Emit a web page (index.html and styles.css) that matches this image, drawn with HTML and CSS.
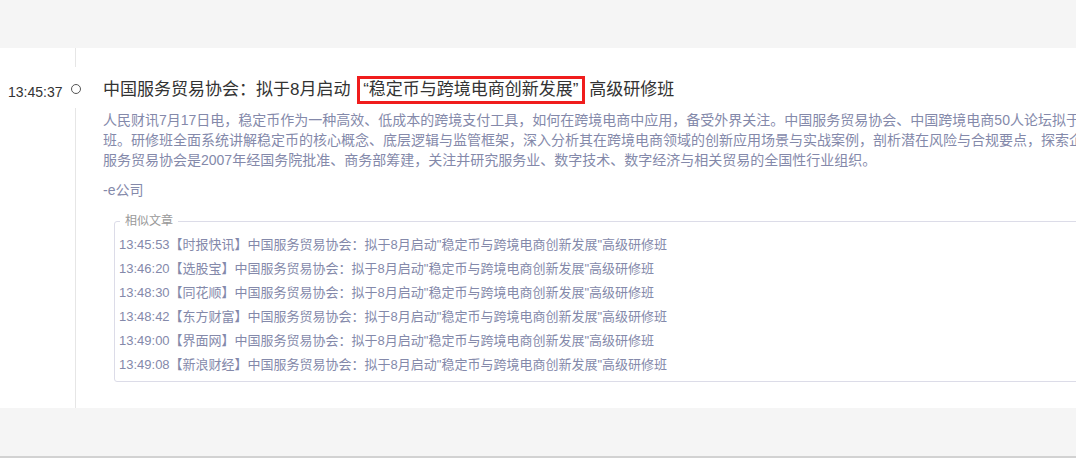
FILE: index.html
```html
<!DOCTYPE html>
<html lang="zh-CN"><head>
  <meta charset="utf-8">
  <title>快讯</title>
<link rel="stylesheet" href="styles.css">
</head>
<body>
<div id="topbar"></div>

<div id="feed">
 <div class="item">
  <div class="time">13:45:37</div>
  <div class="axis">
   <div class="line top"></div>
   <div class="dot"></div>
   <div class="line rest"></div>
  </div>
  <div class="content">
   <h2 class="title">中国服务贸易协会：拟于8月启动 <span class="mark">“稳定币与跨境电商创新发展”</span> 高级研修班</h2>
   <p class="summary">人民财讯7月17日电，稳定币作为一种高效、低成本的跨境支付工具，如何在跨境电商中应用，备受外界关注。中国服务贸易协会、中国跨境电商50人论坛拟于8月启动“稳定币与跨境电商创新发展”高级研修<br>班。研修班全面系统讲解稳定币的核心概念、底层逻辑与监管框架，深入分析其在跨境电商领域的创新应用场景与实战案例，剖析潜在风险与合规要点，探索企业出海新路径。中国<br>服务贸易协会是2007年经国务院批准、商务部筹建，关注并研究服务业、数字技术、数字经济与相关贸易的全国性行业组织。</p>
   <p class="source">-e公司</p>
   <fieldset class="similar">
    <legend>相似文章</legend>
    <div class="row">13:45:53【时报快讯】中国服务贸易协会：拟于8月启动"稳定币与跨境电商创新发展"高级研修班</div>
    <div class="row">13:46:20【选股宝】中国服务贸易协会：拟于8月启动"稳定币与跨境电商创新发展"高级研修班</div>
    <div class="row">13:48:30【同花顺】中国服务贸易协会：拟于8月启动"稳定币与跨境电商创新发展"高级研修班</div>
    <div class="row">13:48:42【东方财富】中国服务贸易协会：拟于8月启动"稳定币与跨境电商创新发展"高级研修班</div>
    <div class="row">13:49:00【界面网】中国服务贸易协会：拟于8月启动"稳定币与跨境电商创新发展"高级研修班</div>
    <div class="row">13:49:08【新浪财经】中国服务贸易协会：拟于8月启动"稳定币与跨境电商创新发展"高级研修班</div>
   </fieldset>
  </div>
 </div><!-- item -->
</div><!-- feed -->

<div id="bottombar"></div>
</body></html>
```

FILE: styles.css
```css
html, body{
  margin: 0;
  padding: 0;
  overflow: hidden;
  background-color: #fff;
  font-family: "Liberation Sans", "Noto Sans CJK SC", sans-serif;
  color: #333;
}
div#topbar{
  height: 48px;
  background-color: #f5f5f5;
}
div#bottombar{
  height: 48px;
  background-color: #f5f5f5;
  border-bottom: 2px solid #d2d2d2;
}

div#feed{
  background-color: #fff;
}
div.item{
  display: flex;
  height: 360px;
}
div.time{
  flex-shrink: 0;
  width: 62px;
  padding-left: 8px;
  padding-top: 34px;
  font-size: 14px;
  line-height: 20px;
  color: #333;
}
div.axis{
  flex-shrink: 0;
  width: 11px;
  display: flex;
  flex-direction: column;
  align-items: center;
}
div.line{
  width: 1px;
  background-color: #e6e6e6;
}
div.line.top{
  height: 19px;
}
div.dot{
  box-sizing: border-box;
  width: 10px;
  height: 10px;
  margin: 17px 0 14px 0;
  border: 1.5px solid #555;
  border-radius: 50%;
}
div.line.rest{
  flex: 1;
}

div.content{
  flex-shrink: 0;
  margin-left: 22px;
  padding-top: 28px;
  width: 1010px;
}
h2.title{
  margin: 0;
  font-size: 17px;
  font-weight: normal;
  line-height: 28px;
  color: #333;
  white-space: nowrap;
}
span.mark{
  display: inline-block;
  box-sizing: border-box;
  height: 28px;
  line-height: 22px;
  margin-left: 2px;
  padding: 0 3px;
  border: 3px solid #f01d1d;
  vertical-align: top;
}
p.summary{
  margin: 6px 0 0 0;
  font-size: 14px;
  line-height: 20px;
  color: #8489aa;
  white-space: nowrap;
  overflow: hidden;
}
p.source{
  margin: 10px 0 0 0;
  font-size: 14px;
  line-height: 20px;
  color: #8489aa;
}
fieldset.similar{
  margin: 13px 0 0 11px;
  padding: 4px 4px 4px 4px;
  border: 1px solid #dcdce8;
  border-radius: 3px;
  width: 1000px;
}
fieldset.similar legend{
  margin-left: 1px;
  padding: 0 5px;
  font-size: 12px;
  line-height: 16px;
  color: #999;
}
div.row{
  font-size: 13px;
  line-height: 24px;
  color: #8489aa;
  white-space: nowrap;
}
```
